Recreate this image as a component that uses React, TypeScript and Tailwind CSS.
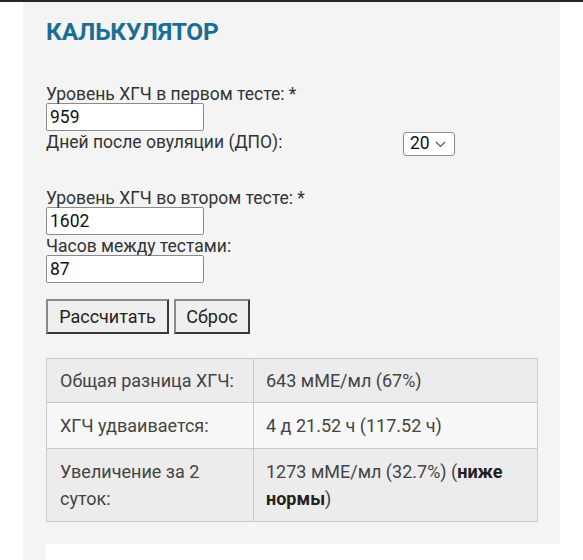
import React from "react"

const font = { fontFamily: "Roboto, 'Noto Sans', sans-serif" }

function Field({ label, value }: { label: string; value: string }) {
  return (
    <div className="flex flex-col">
      <span className="leading-[20px] translate-y-[1px]">{label}</span>
      <input
        readOnly
        value={value}
        className="w-[158px] h-[28px] px-[3px] bg-white border border-[#8a8a8a] rounded-[2px] text-[#111] outline-none"
      />
    </div>
  )
}

export default function App() {
  return (
    <div className="w-[583px] h-[560px] bg-white overflow-hidden text-[17.5px] text-[#333]" style={font}>
      <div className="h-[2px] bg-[#262626]" />
      <div className="ml-[23px] w-[537px] h-[558px] bg-[#f4f4f4] flex flex-col">
        <div className="px-[23px]">
          <h2 className="pt-[16px] text-[24.5px] leading-[28px] font-bold text-[#1a6e96] tracking-[-0.2px]">
            КАЛЬКУЛЯТОР
          </h2>

          <div className="mt-[37px]">
            <Field label="Уровень ХГЧ в первом тесте: *" value="959" />
            <div className="flex items-start justify-between w-[409px]">
              <span className="leading-[20px] translate-y-[1px]">Дней после овуляции (ДПО):</span>
              <div className="mt-[1px] h-[24px] w-[52px] flex items-center gap-[5px] pl-[6px] bg-white border border-[#8a8a8a] rounded-[3px] text-[#111]">
                <span className="leading-none">20</span>
                <svg width="11" height="7" viewBox="0 0 11 7" fill="none">
                  <path d="M1 1l4.5 4.5L10 1" stroke="#555" strokeWidth="1.2" />
                </svg>
              </div>
            </div>
          </div>

          <div className="mt-[31px] flex flex-col">
            <Field label="Уровень ХГЧ во втором тесте: *" value="1602" />
            <Field label="Часов между тестами:" value="87" />
          </div>

          <div className="mt-[16px] flex gap-[5px]">
            <button className="h-[35px] w-[123px] bg-[#efefef] border-2 border-[#3a3a3a] border-t-[#8a8a8a] border-l-[#8a8a8a] text-[#222] text-[18px]">
              Рассчитать
            </button>
            <button className="h-[35px] w-[76px] bg-[#efefef] border-2 border-[#3a3a3a] border-t-[#8a8a8a] border-l-[#8a8a8a] text-[#222] text-[18px]">
              Сброс
            </button>
          </div>

          <table className="mt-[24px] w-[492px] border-collapse text-[#444] text-[18px] leading-[27px]">
            <tbody>
              <tr className="bg-[#ececec]">
                <td className="w-[207px] border border-[#c9c9c9] px-[13px] py-[8px] align-top">Общая разница ХГЧ:</td>
                <td className="border border-[#c9c9c9] px-[12px] py-[8px] align-top">643 мМЕ/мл (67%)</td>
              </tr>
              <tr className="bg-[#f8f8f8]">
                <td className="border border-[#c9c9c9] px-[13px] py-[9px] align-top">ХГЧ удваивается:</td>
                <td className="border border-[#c9c9c9] px-[12px] py-[9px] align-top">4 д 21.52 ч (117.52 ч)</td>
              </tr>
              <tr className="bg-[#ececec]">
                <td className="border border-[#c9c9c9] px-[13px] py-[9px] align-top">Увеличение за 2 суток:</td>
                <td className="border border-[#c9c9c9] px-[12px] py-[9px] align-top">
                  1273 мМЕ/мл (32.7%) (<b className="text-[#222]">ниже нормы</b>)
                </td>
              </tr>
            </tbody>
          </table>
        </div>
        <div className="mt-[22px] ml-[22px] flex-1 bg-white" />
      </div>
    </div>
  )
}
